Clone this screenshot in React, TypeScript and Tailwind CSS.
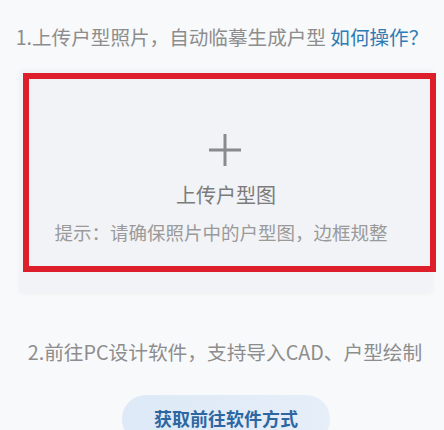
import React from "react";

export default function App() {
  const font = { fontFamily: '"Noto Sans CJK SC", "Noto Sans", sans-serif' };
  return (
    <div
      className="w-[444px] h-[430px] overflow-hidden bg-[#f8f9fb] flex flex-col items-center"
      style={font}
    >
      <div className="shrink-0 mt-[24px] h-[26px] leading-[26px] text-[19.6px] text-[#8d8d8d] whitespace-nowrap">
        1.上传户型照片，自动临摹生成户型 <span className="text-[#2e7cb5]">如何操作？</span>
      </div>

      <div className="shrink-0 relative mt-[20px] ml-[8px] w-[412px] h-[222px] bg-[#f2f3f6] shadow-[0_1px_6px_rgba(0,0,0,0.05)] flex flex-col items-center">
        <svg width="32" height="32" viewBox="0 0 32 32" className="shrink-0 mt-[64px] ml-[-2px]">
          <rect x="0" y="14.5" width="32" height="3" fill="#8a8a8c" />
          <rect x="14.5" y="0" width="3" height="32" fill="#8a8a8c" />
        </svg>
        <div className="shrink-0 mt-[16px] h-[26px] leading-[26px] text-[20px] text-[#7b7b7b]">上传户型图</div>
        <div className="shrink-0 mt-[11px] h-[26px] leading-[26px] text-[18.5px] text-[#9a9a9a] whitespace-nowrap ml-[-10px]">
          提示：请确保照片中的户型图，边框规整
        </div>
        <div className="absolute left-[3px] top-[3px] w-[413px] h-[199px] border-[6px] border-[#dc1f2b] pointer-events-none" />
      </div>

      <div className="shrink-0 mt-[47px] h-[26px] leading-[26px] text-[19.7px] text-[#8d8d8d] whitespace-nowrap ml-[6px]">
        2.前往PC设计软件，支持导入CAD、户型绘制
      </div>

      <div className="mt-[30px] ml-[8px] w-[208px] h-[48px] shrink-0 rounded-full bg-gradient-to-r from-[#dde9f7] to-[#e6eef8] flex items-start justify-center pt-[10px]">
        <span className="text-[18px] leading-[26px] font-bold text-[#2d67a2]">获取前往软件方式</span>
      </div>
    </div>
  );
}
